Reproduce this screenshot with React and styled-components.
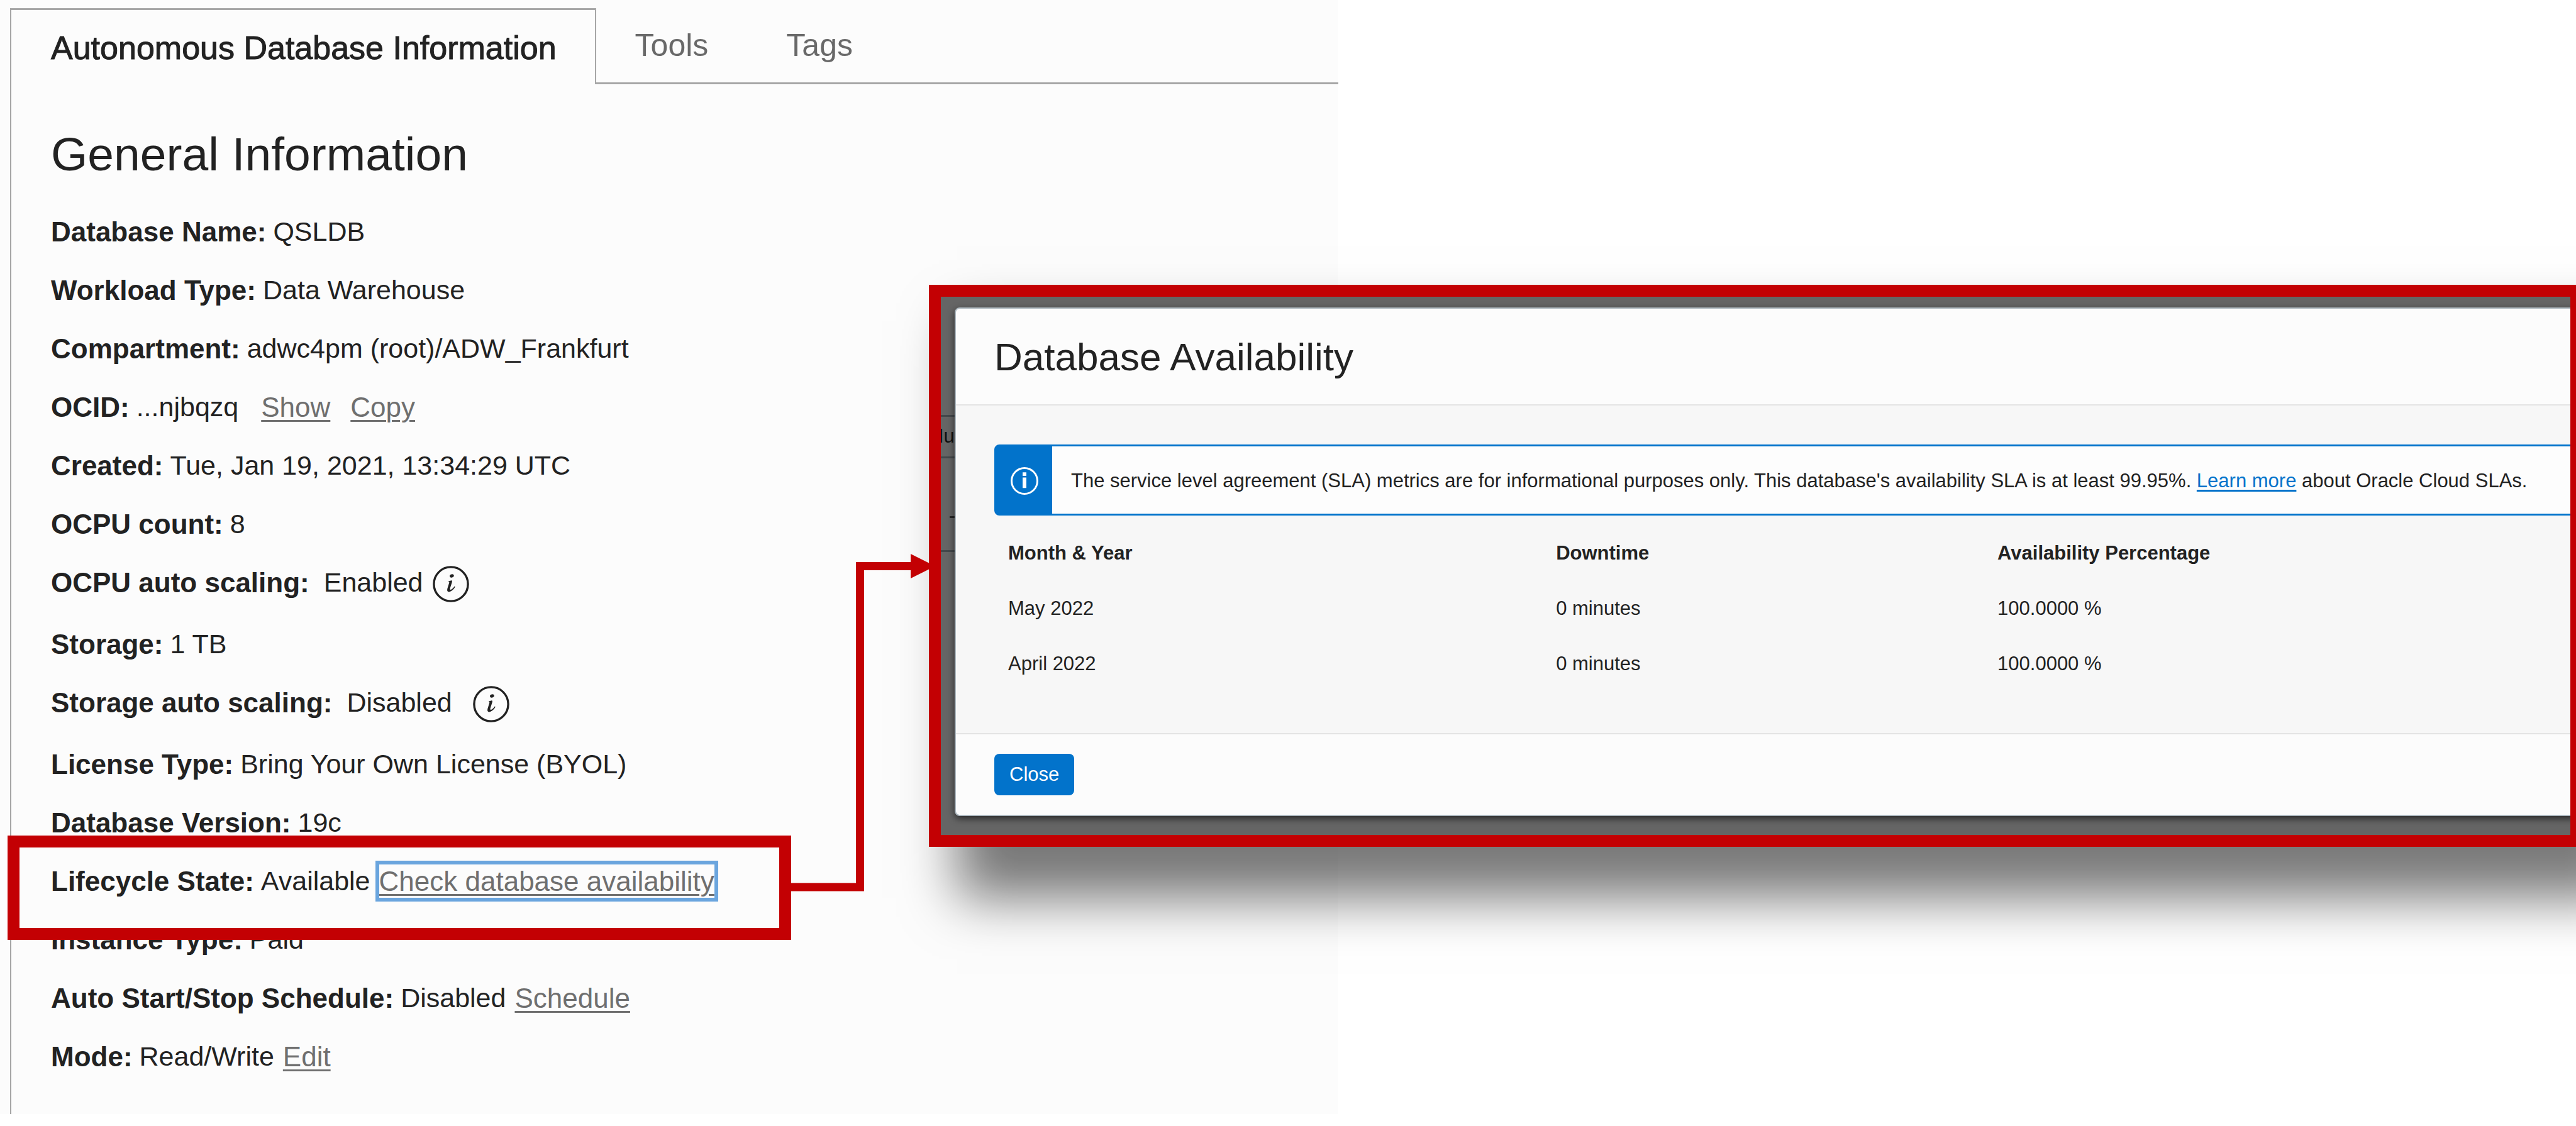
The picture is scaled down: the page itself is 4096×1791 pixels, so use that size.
import React from "react";
import styled, { createGlobalStyle, css } from "styled-components";

const red = "#c30003";
const ink = "#222222";
const blue = "#0273cb";

const GlobalStyle = createGlobalStyle`
  *, *::before, *::after { box-sizing: border-box; }
  body {
    margin: 0;
    background: #ffffff;
    color: ${ink};
    font-family: "Liberation Sans", Arial, Helvetica, sans-serif;
  }
  button { font-family: inherit; }
`;

const Page = styled.main`
  position: relative;
  display: grid;
  grid-template-columns: 133fr 123fr;
  min-height: 100vh;
  align-items: start;
  overflow: hidden;
`;

const Console = styled.section`
  padding: 13px 0 0 16px;
  background: #fcfcfc;
`;

const TabBar = styled.div`
  display: flex;
`;

const Tab = styled.button`
  height: 121px;
  padding: 29px 62px 0;
  border: 0;
  border-bottom: 3px solid #a6a6a6;
  background: none;
  color: #696969;
  font-size: 50px;
  line-height: 60px;
  display: flex;
  align-items: flex-start;
  white-space: nowrap;

  ${({ $active }) =>
    $active &&
    css`
      padding: 30px 61px 0 63px;
      border: solid #a6a6a6;
      border-width: 3px 2px 0;
      color: ${ink};
      font-size: 52px;
      -webkit-text-stroke: 1px ${ink};
    `}
`;

const TabRule = styled.div`
  flex: 1;
  border-bottom: 3px solid #a6a6a6;
`;

const TabPanel = styled.div`
  padding: 69px 63px 65px;
  border-left: 2px solid #a6a6a6;
`;

const Heading = styled.h1`
  margin: 0 0 55px;
  font-size: 75px;
  line-height: 84px;
  font-weight: 400;
`;

const Facts = styled.ul`
  display: flex;
  flex-direction: column;
  gap: 40px;
  margin: 0;
  padding: 0;
  list-style: none;
`;

const Fact = styled.li`
  position: relative;
  display: flex;
  align-items: flex-start;
  gap: ${({ $gap }) => $gap || 11}px;
  font-size: 43px;
  line-height: 53px;
  white-space: nowrap;
  b { font-size: 44px; }
`;

const Links = styled.span`
  display: flex;
  gap: 32px;
  margin-left: ${({ $apart }) => ($apart ? 25 : 3)}px;
`;

const TextLink = styled.a`
  color: #6f6f6f;
  font-size: 44px;
  text-decoration: underline;
  text-decoration-thickness: 3px;
  text-underline-offset: 5px;
  ${({ $focused }) => $focused && "outline: 6px solid #6aa5de;"}
`;

const InfoButton = styled.button`
  display: flex;
  width: 58px;
  height: 58px;
  margin-left: ${({ $apart }) => ($apart ? 10 : -8)}px;
  padding: 0;
  border: 0;
  background: none;
  svg { width: 100%; height: 100%; }
`;

const Highlight = styled.span`
  position: absolute;
  z-index: 1;
  top: -46px;
  left: -69px;
  width: 1246px;
  height: 166px;
  border: 19px solid ${red};
  pointer-events: none;
`;

const Connector = styled.svg`
  position: absolute;
  z-index: 3;
  top: 881px;
  left: 1258px;
  width: 229px;
  height: 537px;
`;

const Callout = styled.div`
  position: absolute;
  z-index: 2;
  top: 453px;
  left: 1477px;
  right: -10px;
  border: 19px solid ${red};
  box-shadow: 57px 70px 80px 12px rgba(0, 0, 0, 0.53);
`;

const Backdrop = styled.div`
  position: relative;
  padding: 17px 0 30px 22px;
  background: #656565;
  overflow: hidden;
`;

const Behind = styled.div`
  position: absolute;
  top: 188px;
  left: -22px;
  width: 80px;
  height: 218px;
  border: solid #43484b;
  border-width: 3px 0;
  color: #101010;
  font-size: 31px;
  line-height: 62px;
`;

const BehindRow = styled.div`
  height: 66px;
  padding-left: 4px;
  border-bottom: 3px solid #43484b;
`;

const BehindMark = styled.div`
  width: 20px;
  height: 3px;
  margin: 92px 0 0 36px;
  background: #262626;
`;

const Dialog = styled.section`
  position: relative;
  margin-right: -82px;
  border: 2px solid #adb8bf;
  border-radius: 8px;
  background: #fcfcfc;
  box-shadow: 0 4px 12px rgba(0, 0, 0, 0.6);
`;

const DialogHeader = styled.header`
  padding: 41px 61px 39px;
  border-bottom: 2px solid #e4e4e4;
`;

const DialogTitle = styled.h2`
  margin: 0;
  font-size: 62px;
  line-height: 72px;
  font-weight: 400;
`;

const DialogBody = styled.div`
  padding: 62px 61px 66px;
  background: #f7f7f7;
`;

const DialogFooter = styled.footer`
  padding: 31px 61px;
  border-top: 2px solid #e4e4e4;
`;

const Banner = styled.div`
  display: flex;
  height: 113px;
  border: 3px solid ${blue};
  border-radius: 8px;
  background: #fdfdfd;
`;

const BannerIcon = styled.span`
  display: flex;
  align-items: center;
  justify-content: center;
  width: 89px;
  padding-top: 3px;
  background: ${blue};
  svg { width: 46px; height: 46px; }
`;

const BannerText = styled.p`
  margin: 0;
  padding: 37px 30px 0;
  font-size: 31px;
  line-height: 36px;
  white-space: nowrap;
  a {
    color: ${blue};
    text-decoration-thickness: 3px;
    text-underline-offset: 4px;
  }
`;

const Table = styled.table`
  width: 100%;
  margin-top: 16px;
  border-collapse: collapse;
  table-layout: fixed;
  font-size: 31px;
  line-height: 36px;
  th, td {
    height: 88px;
    padding: 0 22px;
    text-align: left;
    vertical-align: middle;
  }
`;

const MonthColumn = styled.col`
  width: 34.5%;
`;

const DowntimeColumn = styled.col`
  width: 27.8%;
`;

const CloseButton = styled.button`
  display: block;
  padding: 15px 24px;
  border: 0;
  border-radius: 8px;
  background: ${blue};
  color: #ffffff;
  font-size: 31px;
  line-height: 36px;
`;

const InfoIcon = () => (
  <svg viewBox="0 0 58 58" aria-hidden="true">
    <circle cx="29" cy="29" r="27.1" fill="none" stroke={ink} strokeWidth="3.4" />
    <ellipse cx="30.4" cy="16" rx="3.4" ry="2.5" transform="rotate(-15 30.4 16)" fill={ink} />
    <path
      d="M25.2 24.6 29.600 23.200C31.400 22.900 31 25 30.400 27L27.700 35.600C27 38.400 28.400 38.600 30.600 36.900 32.400 35.600 33.800 34 34.800 32.500L35.800 33.300C33.800 37.200 29.400 41.300 25.800 41.400 22.800 41.400 22.700 38.600 23.600 35.600L26.200 27C26.500 25.800 26.100 25.700 25.300 25.900Z"
      fill={ink}
    />
  </svg>
);

const availability = [
  ["May 2022", "0 minutes", "100.0000 %"],
  ["April 2022", "0 minutes", "100.0000 %"],
];

export default function App() {
  return (
    <>
      <GlobalStyle />
      <Page>
        <Console>
          <TabBar role="tablist">
            <Tab role="tab" aria-selected="true" $active>
              Autonomous Database Information
            </Tab>
            <Tab role="tab" aria-selected="false">Tools</Tab>
            <Tab role="tab" aria-selected="false">Tags</Tab>
            <TabRule />
          </TabBar>
          <TabPanel role="tabpanel">
            <Heading>General Information</Heading>
            <Facts>
              <Fact><b>Database Name:</b><span>QSLDB</span></Fact>
              <Fact><b>Workload Type:</b><span>Data Warehouse</span></Fact>
              <Fact><b>Compartment:</b><span>adwc4pm (root)/ADW_Frankfurt</span></Fact>
              <Fact>
                <b>OCID:</b>
                <span>...njbqzq</span>
                <Links $apart>
                  <TextLink href="#show">Show</TextLink>
                  <TextLink href="#copy">Copy</TextLink>
                </Links>
              </Fact>
              <Fact><b>Created:</b><span>Tue, Jan 19, 2021, 13:34:29 UTC</span></Fact>
              <Fact><b>OCPU count:</b><span>8</span></Fact>
              <Fact $gap={23}>
                <b>OCPU auto scaling:</b>
                <span>Enabled</span>
                <InfoButton aria-label="About OCPU auto scaling"><InfoIcon /></InfoButton>
              </Fact>
              <Fact><b>Storage:</b><span>1 TB</span></Fact>
              <Fact $gap={23}>
                <b>Storage auto scaling:</b>
                <span>Disabled</span>
                <InfoButton $apart aria-label="About storage auto scaling"><InfoIcon /></InfoButton>
              </Fact>
              <Fact><b>License Type:</b><span>Bring Your Own License (BYOL)</span></Fact>
              <Fact><b>Database Version:</b><span>19c</span></Fact>
              <Fact>
                <b>Lifecycle State:</b>
                <span>Available</span>
                <Links>
                  <TextLink href="#availability" $focused>Check database availability</TextLink>
                </Links>
                <Highlight />
              </Fact>
              <Fact><b>Instance Type:</b><span>Paid</span></Fact>
              <Fact>
                <b>Auto Start/Stop Schedule:</b>
                <span>Disabled</span>
                <Links><TextLink href="#schedule">Schedule</TextLink></Links>
              </Fact>
              <Fact>
                <b>Mode:</b>
                <span>Read/Write</span>
                <Links><TextLink href="#edit">Edit</TextLink></Links>
              </Fact>
            </Facts>
          </TabPanel>
        </Console>

        <Connector viewBox="0 0 229 537" aria-hidden="true">
          <path d="M0 530H109.5V19.500H195" fill="none" stroke={red} strokeWidth="13" />
          <path d="M190 0 229 19.500 190 39Z" fill={red} />
        </Connector>

        <Callout>
          <Backdrop>
            <Behind aria-hidden="true">
              <BehindRow>Hu</BehindRow>
              <BehindMark />
            </Behind>
            <Dialog role="dialog" aria-labelledby="availability-title">
              <DialogHeader>
                <DialogTitle id="availability-title">Database Availability</DialogTitle>
              </DialogHeader>
              <DialogBody>
                <Banner>
                  <BannerIcon>
                    <svg viewBox="0 0 46 46" aria-hidden="true">
                      <circle cx="23" cy="23" r="20.5" fill="none" stroke="#fff" strokeWidth="3" />
                      <path d="M23 9.300v5.800M23 17.400v16.800" stroke="#fff" strokeWidth="6" />
                    </svg>
                  </BannerIcon>
                  <BannerText>
                    The service level agreement (SLA) metrics are for informational purposes only. This
                    database's availability SLA is at least 99.95%. <a href="#sla">Learn more</a> about
                    Oracle Cloud SLAs.
                  </BannerText>
                </Banner>
                <Table>
                  <colgroup>
                    <MonthColumn />
                    <DowntimeColumn />
                    <col />
                  </colgroup>
                  <thead>
                    <tr>
                      <th scope="col">Month &amp; Year</th>
                      <th scope="col">Downtime</th>
                      <th scope="col">Availability Percentage</th>
                    </tr>
                  </thead>
                  <tbody>
                    {availability.map((row) => (
                      <tr key={row[0]}>
                        {row.map((cell, index) => (
                          <td key={index}>{cell}</td>
                        ))}
                      </tr>
                    ))}
                  </tbody>
                </Table>
              </DialogBody>
              <DialogFooter>
                <CloseButton>Close</CloseButton>
              </DialogFooter>
            </Dialog>
          </Backdrop>
        </Callout>
      </Page>
    </>
  );
}
